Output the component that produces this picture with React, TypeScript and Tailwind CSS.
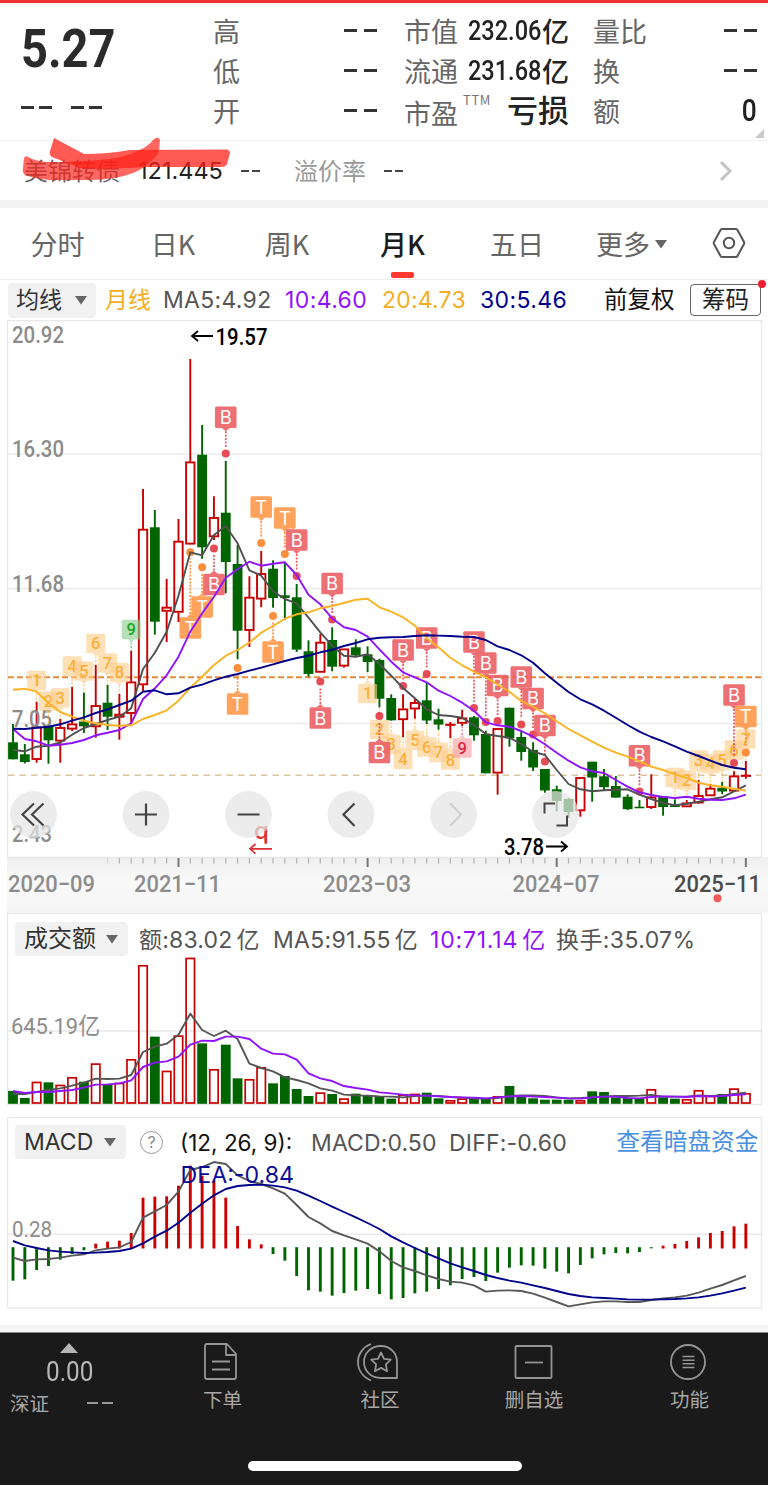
import React from "react";

const STEP = 11.82;
const xOf = (i: number) => 13 + STEP * i;
const CJK = "Inter, 'Noto Sans CJK SC', sans-serif";
const DIN = "Roboto, 'Noto Sans CJK SC', sans-serif";
const RED = "#c80000";
const GREEN = "#006400";

// [direction, body top, body bottom, high, low]
type Candle = [1 | 0, number, number, number, number];
const candles: Candle[] = [
  [0, 742.3, 759.3, 724, 759.3], [0, 754.3, 762, 744, 763.5], [1, 726.7, 759.7, 702, 762.7],
  [0, 726, 740.3, 725, 763.7], [1, 727.3, 741.3, 719, 762.7], [1, 723.7, 729.3, 687, 731],
  [0, 721.5, 726.3, 692.7, 733], [1, 705.3, 727, 665, 737.7], [0, 702.7, 716.7, 685, 730],
  [1, 714, 717.5, 694, 739.7], [1, 681.7, 713.7, 651, 723], [1, 529, 685, 489, 691.7],
  [0, 527.3, 621.7, 510, 634.7], [1, 607, 611.5, 579, 642], [1, 541, 612.5, 519, 622],
  [1, 461.7, 544.3, 359, 544], [0, 454.7, 547.3, 425, 558.7], [1, 517.3, 537, 496.3, 540],
  [0, 512.7, 562, 461, 593.3], [0, 564, 630.7, 545, 659.3], [1, 597, 630.7, 576.3, 647],
  [1, 573.3, 599.3, 551, 607.3], [0, 568.7, 598, 560.3, 607.7], [0, 595.3, 597.9, 562.7, 619.7],
  [0, 597.3, 649.6, 584, 652], [0, 651.3, 674, 640.3, 676.7], [1, 642, 672.5, 634, 672.5],
  [0, 640, 666.7, 627.3, 671.3], [1, 648.7, 666.3, 648.7, 667.7], [0, 647.3, 655.3, 639.3, 656],
  [0, 654.3, 662, 646.3, 672], [0, 660, 698.7, 658.7, 707.3], [0, 698, 720.3, 694.3, 720.6],
  [1, 708.7, 719.9, 694.3, 737.3], [1, 702.3, 709.2, 699, 718.7], [0, 700.3, 720.5, 683, 724],
  [0, 719.3, 724.6, 708.7, 729.7], [1, 724, 725, 722, 738], [1, 717.7, 723.5, 709.7, 726.3],
  [0, 717.3, 735.3, 716, 740.7], [0, 734, 773.3, 730.7, 773.3], [1, 728.3, 773.3, 728.3, 794.7],
  [0, 707.7, 738.3, 707.7, 746.7], [0, 737, 752, 732, 760.7], [0, 750, 767.5, 742.3, 771],
  [0, 769, 790.5, 769, 792.7], [0, 789.3, 801, 785.7, 811.3], [0, 799, 812, 798, 818],
  [1, 777.3, 811, 777.3, 816.7], [0, 761.7, 777.5, 761.7, 801.7], [0, 776.3, 787.2, 769, 791],
  [0, 786, 797.6, 776, 797.6], [0, 796.7, 809.2, 794.3, 810], [0, 806.7, 808.3, 800, 808],
  [1, 796.7, 807.7, 774.3, 809], [0, 796.3, 807, 796.3, 815.7], [0, 805.3, 807, 799.3, 807],
  [1, 802.7, 807, 800, 807], [1, 795.3, 803.2, 780, 804], [1, 788, 796, 784, 796],
  [0, 787.7, 791.5, 782, 794.3], [1, 775.7, 791.3, 771.3, 791.3], [1, 775, 776, 761, 778.7],
];

const ma5 = [750, 751.3, 746.7, 745.7, 742.5, 734.7, 728, 724, 720, 716.7, 708.3, 669, 652.7, 631.7, 595.7, 552.3, 555.3, 535, 526, 543.3, 570.3, 575.7, 591.3, 599, 603.3, 617.7, 632.3, 645.7, 655.7, 656.7, 654.3, 664, 675.7, 688, 698.3, 709.3, 715, 716, 717.7, 725, 734, 736, 737.7, 744, 751.7, 755, 770, 784, 789.3, 791.3, 790.3, 789.7, 789.3, 794.7, 799, 803, 805.3, 803.7, 801.7, 799.3, 797.3, 791.3, 785.3];
const ma10 = [729, 739, 741.3, 745.7, 744.7, 743, 740, 735.3, 732.7, 730, 723.3, 699, 688.3, 675.3, 656.7, 631.7, 613.3, 596.7, 577.7, 569.3, 561.7, 565.7, 563.7, 562.3, 575, 594.7, 604.3, 618.3, 627.3, 630, 636.7, 649.3, 661.7, 672.3, 677.3, 682.3, 690.7, 696, 702.7, 710.7, 722.3, 725.3, 726.7, 731, 736.7, 744.3, 752.7, 760.7, 767.3, 771.3, 773, 780, 786.7, 792.3, 795, 797, 798, 796.7, 798.7, 799.7, 800, 798.3, 794.7];
const ma20 = [689.7, 688.7, 691.7, 703, 712, 716.7, 720.7, 723.3, 725, 725.7, 725.3, 719, 715, 710.3, 700.7, 687.7, 676.7, 665, 655.7, 650, 642.5, 632.7, 626, 618.7, 614.3, 612.3, 608.3, 606, 603, 599.7, 598.7, 607.3, 611.7, 617.3, 625.7, 638.3, 647.3, 657.7, 665.3, 671.7, 677.3, 684.5, 691.7, 701, 706.7, 713.3, 721.3, 729, 735.3, 741.7, 747.7, 752.7, 756.7, 761.3, 766.7, 770, 774.3, 778, 782.7, 785.3, 786.7, 788.7, 790.7];
const ma30 = [728.7, 729, 727.7, 726.7, 724.3, 720.7, 717.3, 713, 709.3, 705, 700.7, 691.7, 690.3, 694.3, 693.3, 687.7, 684.7, 680.3, 676.7, 674, 670.7, 667.7, 664.3, 661, 658, 655.7, 652.3, 649.7, 646, 643, 639.3, 637.7, 637.3, 637, 636, 635.3, 635.6, 636, 636.7, 637, 640, 646.3, 650, 655.3, 662.7, 673.3, 682.7, 692, 699.3, 704.3, 710.7, 717.7, 725, 731.7, 737, 741.3, 746.3, 751.7, 756, 760.7, 765, 767.7, 769.3];

const third = (base: number, a: number[]) => a.map((v) => base + v / 3);
const vol = third(910, [543, 564, 515, 517, 524, 501, 515, 460, 522, 518, 447, 165, 380, 482, 376, 143, 400, 477, 404, 505, 507, 471, 520, 498, 537, 558, 547, 552, 565, 551, 556, 558, 566, 553, 551, 548, 565, 570, 565, 566, 566, 558, 528, 560, 565, 569, 569, 569, 570, 544, 546, 562, 564, 566, 537, 562, 566, 567, 540, 557, 552, 535, 549]);
const vol5 = third(910, [552, 552, 546, 540, 535, 527, 518, 506, 507, 506, 495, 426, 410, 401, 374, 311, 360, 378, 362, 387, 461, 474, 484, 502, 510, 520, 535, 542, 554, 556, 557, 559, 560, 562, 558, 557, 558, 561, 563, 566, 566, 564, 558, 556, 556, 558, 562, 565, 564, 562, 559, 558, 558, 557, 555, 560, 560, 560, 556, 558, 556, 552, 548]);
const vol10 = third(910, [543, 549, 546, 546, 543, 540, 533, 524, 523, 520, 511, 471, 458, 454, 440, 404, 392, 393, 380, 380, 387, 416, 431, 433, 449, 490, 505, 513, 528, 534, 539, 547, 550, 554, 556, 557, 559, 561, 562, 563, 565, 562, 559, 558, 560, 561, 563, 565, 566, 562, 560, 560, 564, 565, 561, 559, 560, 561, 558, 559, 558, 555, 553]);
const macd = third(1115, [497, 493, 465, 453, 434, 417, 406, 386, 380, 377, 354, 248, 245, 244, 212, 152, 182, 197, 248, 333, 373, 388, 417, 437, 483, 526, 530, 542, 534, 527, 522, 537, 553, 549, 535, 530, 522, 511, 492, 486, 498, 473, 458, 451, 452, 461, 470, 475, 450, 430, 418, 414, 415, 411, 400, 392, 387, 378, 367, 354, 348, 334, 326]);
const diff = third(1115, [428, 438, 433, 432, 428, 422, 418, 406, 401, 397, 381, 308, 289, 270, 230, 165, 156, 141, 147, 181, 198, 207, 220, 236, 270, 306, 325, 348, 361, 373, 386, 409, 438, 457, 468, 481, 492, 500, 503, 511, 530, 527, 526, 528, 536, 548, 561, 574, 568, 562, 559, 559, 561, 561, 555, 550, 547, 542, 533, 521, 510, 496, 483]);
const dea = third(1115, [378, 391, 399, 406, 410, 412, 414, 413, 411, 408, 401, 385, 365, 347, 323, 293, 266, 241, 222, 213, 210, 209, 212, 217, 227, 242, 258, 275, 291, 307, 324, 342, 364, 382, 399, 415, 430, 445, 457, 468, 480, 489, 497, 503, 511, 519, 528, 537, 543, 547, 549, 551, 553, 554, 554, 553, 552, 550, 547, 542, 535, 527, 518]);

// [candle index, badge centre y, dot y, letter]
const signals: [number, number, number, string][] = [
  [15, 628, 552.3, "T"], [16, 607, 567.3, "T"], [17, 584.5, 548.5, "B"], [18, 417.3, 453.5, "B"],
  [19, 704, 668, "T"], [21, 507, 543, "T"], [23, 518, 554, "T"], [22, 652, 616, "T"],
  [24, 540, 576, "B"], [27, 583.5, 619.5, "B"], [26, 718, 681.5, "B"], [31, 752.5, 716, "B"],
  [33, 650, 686, "B"], [35, 638, 674, "B"], [39, 642, 708, "B"], [40, 663, 722, "B"],
  [41, 685.5, 721, "B"], [43, 677, 724.5, "B"], [44, 698.5, 734.5, "B"], [45, 725.5, 761.5, "B"],
  [53, 755.7, 791.5, "B"], [61, 695, 763, "B"], [62, 716.5, 752.5, "T"],
];

// [candle index, badge centre y, digit, tail end y]
const counts: [number, number, string, number][] = [
  [2, 680.5, "1", 702], [3, 701, "2", 725], [4, 698, "3", 719], [5, 666, "4", 687],
  [6, 671, "5", 692], [7, 643.5, "6", 665], [8, 663, "7", 685], [9, 672.5, "8", 694],
  [10, 629.5, "9", 651], [30, 693.5, "1", 672], [31, 729.5, "2", 707], [32, 744.5, "3", 722],
  [33, 759.5, "4", 738], [34, 740.5, "5", 719], [35, 747, "6", 724], [36, 752.5, "7", 731],
  [37, 760, "8", 738], [38, 748, "9", 727], [56, 777.5, "1", 798], [57, 780, "2", 799],
  [58, 760, "3", 780], [59, 763.5, "4", 784], [60, 760, "5", 782], [61, 750, "6", 771],
  [62, 739, "7", 760],
];

const Line = ({ ys, color, w = 1.9 }: { ys: number[]; color: string; w?: number }) => (
  <polyline fill="none" stroke={color} strokeWidth={w} strokeLinejoin="round" points={ys.map((y, i) => `${xOf(i)},${y}`).join(" ")} />
);

const T = ({ x, y, s, w, fill = "#8c8c8c", size = 23, weight = 500, font = DIN }: { x: number; y: number; s: string; w: number; fill?: string; size?: number; weight?: number; font?: string }) => (
  <text x={x} y={y} fontSize={size} fill={fill} fontWeight={weight} fontFamily={font} textLength={w} lengthAdjust="spacingAndGlyphs">{s}</text>
);

const CountBadge = ({ c: [i, y, n, tail] }: { c: [number, number, string, number] }) => {
  const x = xOf(i);
  const color = n === "9" ? (i < 20 ? "#1fa51f" : "#dc2440") : "#fbae38";
  const bg = n === "9" ? (i < 20 ? "#86cf8c" : "#f79ca2") : "#fdcd8b";
  const d = tail > y ? 1 : -1;
  return (
    <g>
      <rect x={x - 9.5} y={y - 9.7} width={19} height={19.4} rx={1.5} fill={bg} opacity={0.62} />
      <path d={`M${x - 3.5} ${y + d * 9.7} L${x} ${y + d * 13} L${x + 3.5} ${y + d * 9.7}Z`} fill={bg} opacity={0.62} />
      <line x1={x} x2={x} y1={y + d * 13} y2={tail} stroke={color} strokeWidth={1.4} strokeDasharray="2 1.5" opacity={0.6} />
      <text x={x} y={y + 5.8} fontSize={16.5} textAnchor="middle" fill={color} fontFamily={DIN} fontWeight={500}>{n}</text>
    </g>
  );
};

const SignalBadge = ({ c: [i, y, dot, l] }: { c: [number, number, number, string] }) => {
  const x = xOf(i);
  const bg = l === "B" ? "#eb585c" : "#ff9340";
  const d = dot > y ? 1 : -1;
  return (
    <g>
      <line x1={x} x2={x} y1={y + d * 14} y2={dot - d * 6} stroke={bg} strokeWidth={1.7} strokeDasharray="2 1.4" />
      <circle cx={x} cy={dot} r={4} fill={l === "B" ? "#e64c55" : "#fa8f3c"} />
      <g opacity={0.85}>
        <path d={`M${x - 4} ${y + d * 10.6} L${x} ${y + d * 14} L${x + 4} ${y + d * 10.6}Z`} fill={bg} />
        <rect x={x - 10.8} y={y - 10.8} width={21.6} height={21.6} rx={1.5} fill={bg} />
      </g>
      <text x={x} y={y + 6.6} fontSize={18.5} textAnchor="middle" fill="#fff" fontFamily="Inter, sans-serif" fontWeight={400}>{l}</text>
    </g>
  );
};

const Tri = () => <svg width="14" height="10" viewBox="0 0 14 10" className="-ml-[2px] shrink-0"><path d="M1 1h12L7 9.5z" fill="#666" /></svg>;

const Dash = ({ className = "" }: { className?: string }) => (
  <span className={`relative -top-px flex gap-[7px] ${className}`}>
    <i className="block h-[3px] w-[13px] bg-[#333]" />
    <i className="block h-[3px] w-[13px] bg-[#333]" />
  </span>
);

const Cell = ({ label, children }: { label: string; children: React.ReactNode }) => (
  <div className="flex h-10 items-center justify-between">
    <span className="text-[27px] leading-10 text-[#666]">{label}</span>
    {children}
  </div>
);

const Amount = ({ n }: { n: string }) => (
  <span className="flex h-10 w-[101px] items-center whitespace-nowrap text-[#222]">
    <span className="w-[74px]"><span className="inline-block origin-left scale-x-[.84] font-[Roboto] text-[28px] font-medium">{n}</span></span>
    <span className="text-[27px] font-medium">亿</span>
  </span>
);

function Quote() {
  return (
    <header className="flex h-[137px] pt-[8px]">
      <div className="w-[213px] pl-[21px]">
        <div className="h-[78px] origin-left scale-x-[.87] font-[Roboto] text-[54px] leading-[75px] font-bold text-[#2b2b2b]">5.27</div>
        <div className="flex gap-[19px] pt-[18px]"><Dash className="!gap-[5px]" /><Dash className="!gap-[5px]" /></div>
      </div>
      <div className="mr-[27px] w-[164px]">
        <Cell label="高"><Dash /></Cell>
        <Cell label="低"><Dash /></Cell>
        <Cell label="开"><Dash /></Cell>
      </div>
      <div className="mr-[24px] w-[165px]">
        <Cell label="市值"><Amount n="232.06" /></Cell>
        <Cell label="流通"><Amount n="231.68" /></Cell>
        <div className="flex h-10 items-center">
          <span className="pt-1 text-[27px] leading-10 text-[#666]">市盈</span>
          <span className="ml-[5px] -mt-[23px] text-[13px] tracking-[.6px] text-[#777]">TTM</span>
          <span className="-mt-[5px] ml-auto text-[31px] leading-9 font-medium text-[#222]">亏损</span>
        </div>
      </div>
      <div className="w-[164px]">
        <Cell label="量比"><Dash /></Cell>
        <Cell label="换"><Dash /></Cell>
        <Cell label="额"><span className="origin-right scale-x-[.85] font-[Roboto] text-[31px] font-medium text-[#222]">0</span></Cell>
        <svg width="9" height="9" className="ml-auto -mr-[7px] -mt-[2px]"><path d="M9 0v9H0z" fill="#c9c9c9" /></svg>
      </div>
    </header>
  );
}

function BondRow() {
  return (
    <section className="relative flex h-[60px] items-center border-t border-[#f0f0f0] pl-[24px] text-[24px] text-[#999]">
      <span className="-mt-[2px] w-[114px] text-[#666]">美锦转债</span>
      <span className="w-[103px] text-[23.5px] text-[#222]" style={{ fontFamily: CJK }}>121.445</span>
      <span className="flex w-[53px] gap-[3px]"><i className="h-[2px] w-[8px] bg-[#444]" /><i className="h-[2px] w-[8px] bg-[#444]" /></span>
      <span className="-mt-[2px] w-[90px]">溢价率</span>
      <span className="flex gap-[3px]"><i className="h-[2px] w-[8px] bg-[#444]" /><i className="h-[2px] w-[8px] bg-[#444]" /></span>
      <svg width="14" height="22" viewBox="0 0 14 22" className="mr-[35px] ml-auto" fill="none" stroke="#c4c4c4" strokeWidth="3"><path d="M2 2l9 9-9 9" /></svg>
      <svg className="absolute top-[-5px] left-0 blur-[.5px]" width="240" height="50" viewBox="0 136 240 50">
        <path d="M54 138L84 154Q108 154 130 150L227 149.500Q230 150 230 153L227 164Q226 167 221 167L146 167Q100 170 80 168L52 157Q49 155 50 151Z" fill="#ff2118" opacity=".74" />
        <path d="M26 156Q36 162 52 162Q64 163 80 161Q120 160 135 152Q148 147 153 140Q158 135 160 140L159 151Q158 155 152 160Q142 170 133 173Q115 180 90 180L50 180Q35 179 25 175Q22 173 23 168L24 158Z" fill="#ff2118" opacity=".68" />
      </svg>
    </section>
  );
}

function Tabs() {
  const tabs: [string, string][] = [["分时", "w-[115px]"], ["日K", "w-[116px]"], ["周K", "w-[112px]"], ["月K", "w-[119px]"], ["五日", "w-[110px]"]];
  return (
    <nav className="flex h-[71px] items-stretch text-[27px] text-[#666]">
      {tabs.map(([t, w]) => (
        <div key={t} className={`flex flex-col items-center ${w}`}>
          <span className={`h-[64px] leading-[71px] ${t === "月K" ? "font-medium text-[#1c1c1c]" : ""}`}>{t}</span>
          {t === "月K" && <i className="block h-[6px] w-[23px] rounded-[2px] bg-[#ff3b30]" />}
        </div>
      ))}
      <div className="flex w-[117px] items-center gap-[6px] pl-[24px]"><span className="leading-[70px]">更多</span><Tri /></div>
      <svg className="mt-[19px] ml-[23px]" width="34" height="32" viewBox="0 0 34 32" fill="none" stroke="#555" strokeWidth="2"><path d="M10 2h14q1 0 1.5 1l6.500 12q.5 1 0 2L25.500 29q-.5 1-1.500 1H10q-1 0-1.500-1L2 17q-.5-1 0-2L8.500 3q.5-1 1.500-1z" /><circle cx="17" cy="16" r="5.200" /></svg>
    </nav>
  );
}

function Indicators() {
  return (
    <div className="flex h-[41px] items-center border-t border-[#ececec] pl-[8px] text-[23px] whitespace-nowrap" style={{ fontFamily: CJK }}>
      <div className="mr-[9px] flex h-[35px] w-[88px] items-center justify-between rounded bg-[#f1f1f1] px-[8px] text-[#333]">均线<Tri /></div>
      <span className="w-[58px] text-[#f5ae22]">月线</span>
      <span className="w-[122px] tracking-[.3px] text-[#555]">MA5:4.92</span>
      <span className="w-[97px] tracking-[.4px] text-[#9013fe]">10:4.60</span>
      <span className="w-[98px] tracking-[.2px] text-[#f5ae22]">20:4.73</span>
      <span className="w-[124px] tracking-[.4px] text-[#00008f]">30:5.46</span>
      <span className="w-[86px] text-[23.500px] text-[#111]">前复权</span>
      <span className="relative flex h-[32px] w-[71px] items-center justify-center rounded-[4px] border-[1.5px] border-[#666] text-[23.5px] text-[#222]">筹码
        <i className="absolute -top-[5px] -right-[6px] h-2 w-2 rounded-full bg-[#ef2033]" />
      </span>
    </div>
  );
}

function PriceChart() {
  const ticks = Array.from({ length: 55 }, (_, k) => k + 8);
  const major = [14, 30, 46, 62];
  return (
    <svg className="block" width="768" height="593" viewBox="0 320 768 593">
      <defs>
        <linearGradient id="axis" x1="0" y1="0" x2="0" y2="1"><stop offset="0" stopColor="#efefef" /><stop offset=".45" stopColor="#f9f9f9" /><stop offset="1" stopColor="#f4f4f4" /></linearGradient>
      </defs>
      <rect x="7" y="857" width="761" height="56" fill="url(#axis)" />
      <path d="M7.500 320.500H761.500V857.500H7.500Z" fill="none" stroke="#e8e8e8" strokeWidth="1.400" />
      {[454, 588.5, 723.5].map((y) => <line key={y} x1="8" x2="761" y1={y} y2={y} stroke="#ebebeb" strokeWidth="1.400" />)}
      <line x1="8" x2="761" y1="677.300" y2="677.300" stroke="#e88a3a" strokeWidth="2" strokeDasharray="6 3" />
      <line x1="8" x2="761" y1="775.300" y2="775.300" stroke="#dcc59c" strokeWidth="1.400" strokeDasharray="6.500 5" />
      {ticks.map((i) => <line key={i} x1={xOf(i)} x2={xOf(i)} y1="858" y2={major.includes(i) ? 867 : 863.5} stroke={major.includes(i) ? "#777" : "#b5b5b5"} strokeWidth={major.includes(i) ? 2 : 1.3} opacity={i === 8 ? 0.4 : 1} />)}
      {signals.filter((s) => s[0] < 17).map((s) => <SignalBadge key={s[0]} c={s} />)}
      {candles.map(([up, t, b, h, l], i) => {
        const x = xOf(i);
        return up ? (
          <g key={i} stroke={RED} strokeWidth="1.900" fill="none">
            <path d={`M${x} ${h}V${t}M${x} ${b}V${l}`} />
            <rect x={x - 4.2} y={t + 0.7} width={8.4} height={Math.max(b - t - 1.4, 0.2)} fill="none" />
          </g>
        ) : (
          <g key={i} fill={GREEN}>
            <rect x={x - 0.95} y={h} width={1.9} height={l - h} />
            <rect x={x - 4.9} y={t} width={9.8} height={b - t} />
          </g>
        );
      })}
      <T x={12} y={342.500} s="20.92" w={52} />
      <T x={12} y={457} s="16.30" w={52} />
      <T x={12} y={591.500} s="11.68" w={52} />
      <T x={12} y={726.500} s="7.05" w={40} />
      <T x={12} y={841.500} s="2.43" w={40} />
      {counts.map((c, k) => <CountBadge key={k} c={c} />)}
      {signals.filter((s) => s[0] >= 17).map((s) => <SignalBadge key={s[0]} c={s} />)}
      <Line ys={ma5} color="#505050" />
      <Line ys={ma10} color="#9013fe" />
      <Line ys={ma20} color="#fbb324" />
      <Line ys={ma30} color="#00008b" />
      <path d="M213 336H192M198 331l-6 5 6 5M546 846.500h21M561 841.500l6 5-6 5" fill="none" stroke="#000" strokeWidth="1.800" />
      <T x={215.500} y={344.500} s="19.57" w={52} fill="#000" />
      <T x={504} y={854.500} s="3.78" w={40} fill="#000" />
      <text x="254" y="839" fontSize="24" fontWeight="500" fill="#df3131" fontFamily="Inter, sans-serif">q</text>
      <g fill="#e6e6e6" opacity=".72">
        {[33.5, 146, 248.5, 351, 453.5, 555.5].map((x) => <circle key={x} cx={x} cy="814.500" r="23.500" />)}
      </g>
      <g fill="none" stroke="#444" strokeWidth="2.200">
        <path d="M34 803.500L22.500 814.500 34 825.500M43.500 803.500L32 814.500 43.500 825.500" />
        <path d="M135 814.500h22M146 803.500v22M237.500 814.500h22" />
        <path d="M354.500 803.500L343.500 814.500l11 11.500" />
        <path d="M450 803.500l11 11-11 11.500" stroke="#d0d0d0" />
        <path d="M544.500 813.500v-10h10.500M567 815.500v10H556.500" strokeWidth="2" />
      </g>
      <path d="M272 848.800h-22M255.500 844l-5.500 4.800 5.500 4.800M265.500 831v10" fill="none" stroke="#df3131" strokeWidth="1.700" />
      <T x={8} y={892} s="2020−09" w={87} />
      <T x={134} y={892} s="2021−11" w={87} />
      <T x={323} y={892} s="2023−03" w={88} />
      <T x={512.500} y={892} s="2024−07" w={87} />
      <T x={674} y={892} s="2025−11" w={87} fill="#4b4b4b" />
      <circle cx="717.500" cy="898.300" r="4" fill="#f05a5a" />
    </svg>
  );
}

function VolumePanel() {
  return (
    <section className="relative h-[204px]">
      <svg className="block" width="768" height="204" viewBox="0 913 768 204">
        <path d="M7.500 913.500H761.500V1104.500H7.500ZM7.500 1031H761.500" fill="none" stroke="#e9e9e9" strokeWidth="1.400" />
        <T x={11} y={1034} s="645.19亿" w={89} size={22.500} weight={400} />
        {vol.map((y, i) => {
          const x = xOf(i);
          return candles[i][0]
            ? <rect key={i} x={x - 4.2} y={y + 0.8} width={8.4} height={1103 - y - 0.8} fill="none" stroke={RED} strokeWidth="1.700" />
            : <rect key={i} x={x - 4.9} y={y} width={9.8} height={1103.8 - y} fill={GREEN} />;
        })}
        <Line ys={vol5} color="#555" />
        <Line ys={vol10} color="#9013fe" />
      </svg>
      <div className="absolute top-[9px] left-[15px] flex h-[34px] items-center text-[23px] whitespace-nowrap text-[#555]" style={{ fontFamily: CJK }}>
        <div className="mr-[11px] flex h-[34px] w-[113px] items-center justify-between rounded bg-[#f1f1f1] px-[9px] text-[24px] text-[#333]">成交额<Tri /></div>
        <span className="w-[134px] pt-[2px] tracking-[.2px]">额:83.02<span className="ml-[4px]">亿</span></span>
        <span className="w-[157px] pt-[2px] tracking-[.3px]">MA5:91.55<span className="ml-[4px]">亿</span></span>
        <span className="w-[126px] pt-[2px] tracking-[.8px] text-[#9013fe]">10:71.14<span className="ml-[4px]">亿</span></span>
        <span className="pt-[2px] tracking-[.4px]">换手:35.07%</span>
      </div>
    </section>
  );
}

function MacdPanel() {
  return (
    <section className="relative h-[208px]">
      <svg className="block" width="768" height="208" viewBox="0 1117 768 208">
        <path d="M7.500 1117.500H761.500V1308H7.500ZM7.500 1234.300H761.500" fill="none" stroke="#e9e9e9" strokeWidth="1.400" />
        <T x={12} y={1237} s="0.28" w={40} size={22.500} weight={400} />
        {macd.map((y, i) => {
          const up = y < 1247.7 && i !== 54;
          return <line key={i} x1={xOf(i)} x2={xOf(i)} y1={up ? 1248.5 : 1247.2} y2={y} stroke={up ? "#cc0000" : GREEN} strokeWidth="2.900" />;
        })}
        <Line ys={diff} color="#585858" />
        <Line ys={dea} color="#00008b" />
        <T x={180.500} y={1183} s="DEA:-0.84" w={113.500} fill="#0b0b96" size={23} weight={400} font="Inter" />
      </svg>
      <div className="absolute top-[8px] left-[15px] flex h-[34px] w-[743.500px] items-center text-[23px] whitespace-nowrap text-[#555]" style={{ fontFamily: CJK }}>
        <div className="mr-[14px] flex h-[34px] w-[111px] items-center justify-between rounded bg-[#f1f1f1] px-[9px] text-[#333]">MACD<Tri /></div>
        <span className="mr-[17px] flex h-[23px] w-[23px] items-center justify-center rounded-full border-[1.500px] border-[#999] text-[16px] text-[#888]">?</span>
        <span className="w-[131px] pt-[2px] text-[22.500px] text-[#111]">(12, 26, 9):</span>
        <span className="w-[138px] pt-[2px] tracking-[.1px]">MACD:0.50</span>
        <span className="pt-[2px] tracking-[.2px]">DIFF:-0.60</span>
        <span className="ml-auto text-[23.700px] text-[#4a90e2]">查看暗盘资金</span>
      </div>
    </section>
  );
}

function BottomBar() {
  const icons: [string, React.ReactNode][] = [
    ["下单", <><path d="M6 2h20l9 10v23q0 2-2 2H6q-2 0-2-2V4q0-2 2-2zM25 2v11h10M11 19.500h18M11 27.500h18" /></>],
    ["社区", <><path d="M22 4C12 4 5 11 5 20s7 16 17 16h16V20C38 11 31 4 22 4z" /><path d="M12 2C4 5-1 12-1 20s5 15 13 18.500" /><path d="M22 10.500l3 6.300 6.800.9-5 4.700 1.300 6.800-6.100-3.300-6.100 3.300 1.300-6.800-5-4.700 6.800-.9z" /></>],
    ["删自选", <><rect x="2.500" y="4" width="36" height="32" rx="1" /><path d="M12 20.500h18" /></>],
    ["功能", <><circle cx="20" cy="20" r="17" /><path d="M14.500 14.500h12M14.500 18.200h12M14.500 21.800h12M14.500 25.500h12" strokeWidth="1.600" /></>],
  ];
  const widths = ["w-[161px]", "w-[154px]", "w-[154px]", "w-[157px]"];
  return (
    <footer className="h-[153px] border-t border-[#888] bg-[#1a1a1a] text-[19.500px] text-[#a8a8a8]">
      <div className="flex h-[128px]">
        <div className="w-[142px] pl-[10px]">
          <svg width="18" height="11" className="mt-[10px] ml-[50px] block"><path d="M9 0l9 10H0z" fill="#b5b5b5" /></svg>
          <div className="mt-[2px] ml-[36px] h-[32px] origin-left scale-x-[.9] font-[Roboto] text-[27px] leading-[33px] text-[#b8b8b8]">0.00</div>
          <div className="flex h-[30px] items-center">深证<span className="ml-[38px] flex gap-[4px]"><i className="h-[2px] w-[11px] bg-[#999]" /><i className="h-[2px] w-[11px] bg-[#999]" /></span></div>
        </div>
        {icons.map(([label, icon], k) => (
          <div key={label} className={`flex flex-col items-center pt-[9px] ${widths[k]}`}>
            <svg className="mr-[3px] overflow-visible" width="40" height="40" viewBox="0 0 40 40" fill="none" stroke="#959595" strokeWidth="1.800" strokeLinejoin="round">{icon}</svg>
            <span className="mt-[2px] leading-[30px]">{label}</span>
          </div>
        ))}
      </div>
      <div className="mx-auto h-[10px] w-[274px] translate-x-px rounded-full bg-white" />
    </footer>
  );
}

export default function App() {
  return (
    <main className="h-[1486px] w-[768px] overflow-hidden bg-white font-['Noto_Sans_CJK_SC',sans-serif]">
      <div className="h-[3px] bg-[#f03232]" />
      <Quote />
      <BondRow />
      <div className="h-[8px] bg-[#f4f4f4]" />
      <Tabs />
      <Indicators />
      <PriceChart />
      <VolumePanel />
      <MacdPanel />
      <div className="h-[7px] bg-[#f4f4f4]" />
      <BottomBar />
    </main>
  );
}
